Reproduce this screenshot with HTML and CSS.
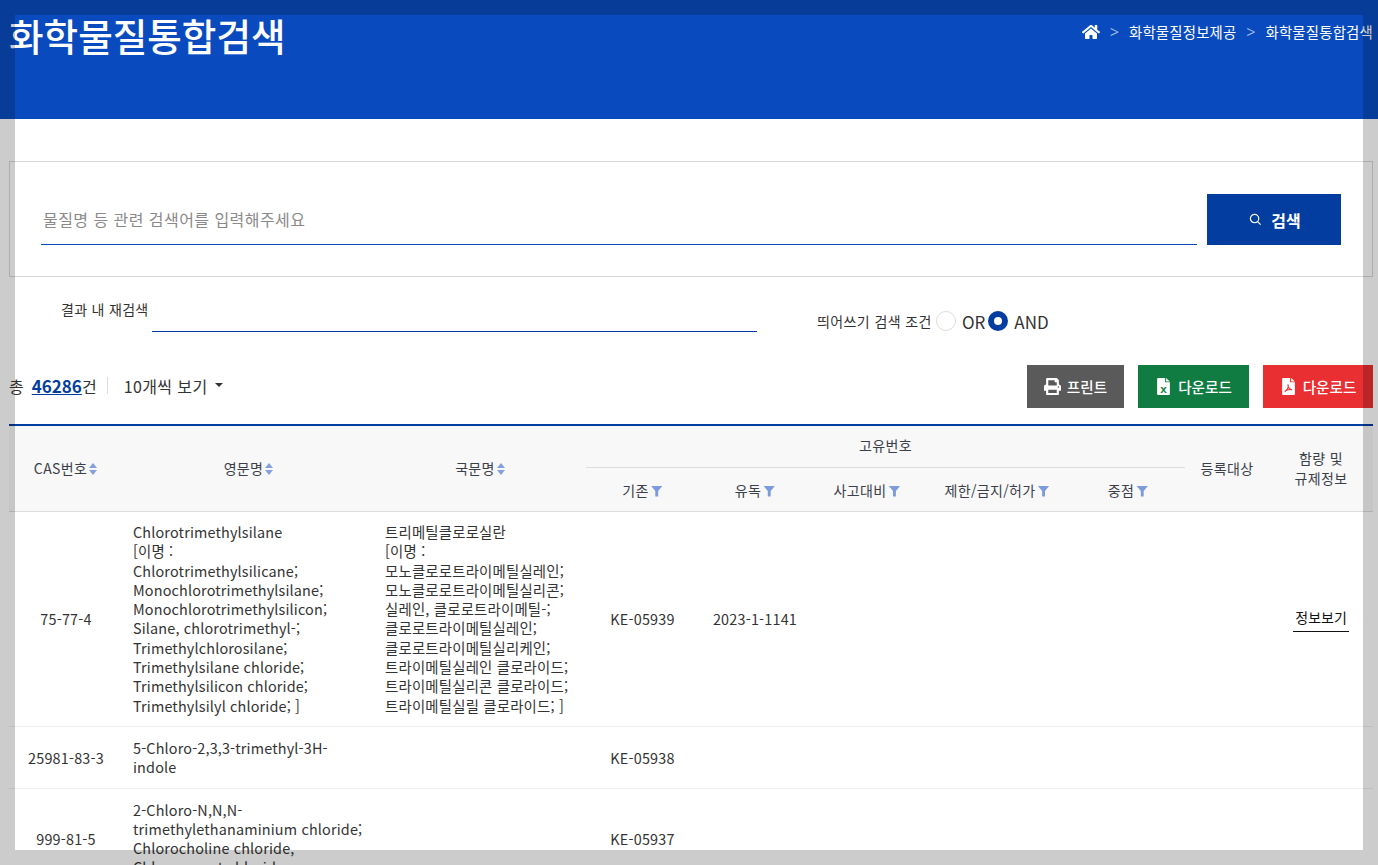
FILE: index.html
```html
<!DOCTYPE html>
<html lang="ko">
<head>
<meta charset="utf-8">
<title>화학물질통합검색</title>
<link rel="stylesheet" href="styles.css">
</head>
<body>
<header class="hero">
  <h1 class="hero-title">화학물질통합검색</h1>
  <nav class="crumbs">
    <svg class="home" viewBox="0 0 576 512"><path d="M280 148 96 300v164c0 9 7 16 16 16l112-.3c9 0 16-7 16-16V368c0-9 7-16 16-16h64c9 0 16 7 16 16v95.700c0 9 7 16 16 16L464 480c9 0 16-7 16-16V300L296 148c-4-3-12-3-16 0zM572 251l-84-69V44c0-7-5-12-12-12h-56c-7 0-12 5-12 12v72l-89-74c-18-14-44-14-61 0L4 251c-5 4-6 12-2 17l26 31c4 5 12 6 17 2L280 107c4-3 12-3 16 0l235 194c5 4 13 3 17-2l26-31c4-5 3-13-2-17z"/></svg>
    <span class="sep">&gt;</span><span>화학물질정보제공</span>
    <span class="sep">&gt;</span><span>화학물질통합검색</span>
  </nav>
</header>

<main class="page">
  <section class="search-box">
    <input class="search-input" type="text" placeholder="물질명 등 관련 검색어를 입력해주세요">
    <button class="search-btn">
      <svg class="glass" viewBox="0 0 14 14"><circle cx="6" cy="6" r="4.500"/><path d="m9.500 9.500 3 3"/></svg>
      검색
    </button>
  </section>

  <section class="refine">
    <label class="refine-label">결과 내 재검색</label>
    <input class="refine-input" type="text">
    <div class="cond">
      <span class="cond-label">띄어쓰기 검색 조건</span>
      <input class="radio" type="radio" name="cond"><span class="cond-opt">OR</span>
      <input class="radio" type="radio" name="cond" checked><span class="cond-opt">AND</span>
    </div>
  </section>

  <section class="toolbar">
    <div class="count">
      <span class="total">총</span><a class="num">46286</a><span>건</span>
      <span class="divider"></span>
      <span class="per">10개씩 보기</span><span class="caret"></span>
    </div>
    <div class="actions">
      <button class="act act-print">
        <svg class="ico-print" viewBox="0 0 512 512"><path d="M448 192V77c0-8-3-17-9-23L393 9c-6-6-14-9-23-9H96C78 0 64 14 64 32v160c-35 0-64 29-64 64v112c0 9 7 16 16 16h48v112c0 9 7 16 16 16h352c9 0 16-7 16-16V384h48c9 0 16-7 16-16V256c0-35-29-64-64-64zm-64 256H128v-96h256v96zm0-224H128V64h192v48c0 9 7 16 16 16h48v96zm48 72c-13 0-24-11-24-24s11-24 24-24 24 11 24 24-11 24-24 24z"/></svg>
        프린트
      </button>
      <button class="act act-xls">
        <svg class="ico-file" viewBox="0 0 12 16"><path class="sheet" d="M0 1q0-1 1-1h6.500v4h4.500v11q0 1-1 1H1q-1 0-1-1zM8.500 0 12 3.200H8.500z"/><text class="x-mark" x="6" y="14">x</text></svg>
        다운로드
      </button>
      <button class="act act-pdf">
        <svg class="ico-file" viewBox="0 0 12 16"><path class="sheet" d="M0 1q0-1 1-1h6.500v4h4.500v11q0 1-1 1H1q-1 0-1-1zM8.500 0 12 3.200H8.500z"/><path class="pdf-mark" d="M5.500 6c.8 2-.5 5-3 7 M5.500 6c-.4 3 2 5 4 5 M2.500 12.500c2-1.500 4-2 7-1.500"/></svg>
        다운로드
      </button>
    </div>
  </section>

  <table class="grid">
    <colgroup>
      <col class="c-cas"><col class="c-en"><col class="c-ko"><col class="c-a"><col class="c-b"><col class="c-c"><col class="c-d"><col class="c-e"><col class="c-f"><col class="c-g">
    </colgroup>
    <thead>
      <tr class="head-1">
        <th rowspan="2">CAS번호<span class="sort"></span></th>
        <th rowspan="2">영문명<span class="sort"></span></th>
        <th rowspan="2">국문명<span class="sort"></span></th>
        <th colspan="5" class="group">고유번호</th>
        <th rowspan="2">등록대상</th>
        <th rowspan="2">함량 및<br>규제정보</th>
      </tr>
      <tr class="head-2">
        <th>기존<span class="funnel"></span></th>
        <th>유독<span class="funnel"></span></th>
        <th>사고대비<span class="funnel"></span></th>
        <th>제한/금지/허가<span class="funnel"></span></th>
        <th>중점<span class="funnel"></span></th>
      </tr>
    </thead>
    <tbody>
      <tr>
        <td class="ctr">75-77-4</td>
        <td class="txt en">Chlorotrimethylsilane<br>[이명 :<br>Chlorotrimethylsilicane;<br>Monochlorotrimethylsilane;<br>Monochlorotrimethylsilicon;<br>Silane, chlorotrimethyl-;<br>Trimethylchlorosilane;<br>Trimethylsilane chloride;<br>Trimethylsilicon chloride;<br>Trimethylsilyl chloride; ]</td>
        <td class="txt">트리메틸클로로실란<br>[이명 :<br>모노클로로트라이메틸실레인;<br>모노클로로트라이메틸실리콘;<br>실레인, 클로로트라이메틸-;<br>클로로트라이메틸실레인;<br>클로로트라이메틸실리케인;<br>트라이메틸실레인 클로라이드;<br>트라이메틸실리콘 클로라이드;<br>트라이메틸실릴 클로라이드; ]</td>
        <td class="ctr">KE-05939</td>
        <td class="ctr">2023-1-1141</td>
        <td></td><td></td><td></td><td></td>
        <td class="ctr"><a class="info">정보보기</a></td>
      </tr>
      <tr>
        <td class="ctr">25981-83-3</td>
        <td class="txt en">5-Chloro-2,3,3-trimethyl-3H-indole</td>
        <td class="txt"></td>
        <td class="ctr">KE-05938</td>
        <td></td><td></td><td></td><td></td><td></td><td></td>
      </tr>
      <tr>
        <td class="ctr">999-81-5</td>
        <td class="txt en">2-Chloro-N,N,N-trimethylethanaminium chloride;<br>Chlorocholine chloride,<br>Chlormequat chloride</td>
        <td class="txt"></td>
        <td class="ctr">KE-05937</td>
        <td></td><td></td><td></td><td></td><td></td><td></td>
      </tr>
    </tbody>
  </table>
</main>

<div class="frame"></div>
</body>
</html>
```

FILE: styles.css
```css
* { box-sizing: border-box; }
html, body { height: 100%; }
body {
  margin: 0;
  height: 865px;
  overflow: hidden;
  background: #fff;
  color: #333;
  font-family: "Noto Sans CJK KR", "Noto Sans", sans-serif;
  font-size: 14.4px;
}
.frame {
  position: fixed;
  inset: 0;
  border: 15px solid rgba(0, 0, 0, .2);
  pointer-events: none;
}
.hero {
  height: 119px;
  background: #094bbf;
  color: #fff;
  display: flex;
  justify-content: space-between;
  align-items: flex-start;
  padding: 0 5px 0 9px;
}
.hero-title {
  margin: 7px 0 0;
  font-size: 37.6px;
  line-height: 56px;
  font-weight: 500;
}
.crumbs {
  display: flex;
  align-items: center;
  margin-top: 21px;
  font-size: 14.4px;
  letter-spacing: .2px;
  line-height: 22px;
}
.home { width: 18px; height: 16px; fill: #fff; }
.sep {
  width: 29px;
  text-align: center;
  opacity: .7;
  font-size: 16px;
  font-family: "Noto Sans", sans-serif;
  font-weight: 300;
}

.page { padding: 0 5px 0 9px; }
.search-box {
  margin-top: 42px;
  height: 116px;
  border: 1px solid #d8d8d8;
  display: flex;
  align-items: flex-start;
  padding: 32px 31px 0 31px;
}
.search-input {
  width: 1156px;
  height: 51px;
  border: 0;
  border-bottom: 1px solid #0a47b8;
  padding: 0 2px;
  outline: 0;
  font: inherit;
  font-size: 16px;
  letter-spacing: .45px;
  color: #333;
}
.search-input::placeholder { color: #8a8a8a; opacity: 1; }
.search-btn {
  margin-left: 10px;
  width: 134px;
  height: 51px;
  border: 0;
  background: #033d9f;
  color: #fff;
  font: inherit;
  font-size: 16px;
  font-weight: 700;
  display: flex;
  align-items: center;
  justify-content: center;
  gap: 9px;
  padding: 0 0 0 2px;
}
.glass { width: 13px; height: 13px; fill: none; stroke: #fff; stroke-width: 1.3; }

.refine {
  display: flex;
  align-items: flex-start;
  height: 88px;
  padding-left: 52px;
}
.refine-label { width: 91px; margin-top: 22px; line-height: 20px; font-size: 14px; letter-spacing: .3px; }
.refine-input {
  width: 605px;
  height: 34px;
  margin-top: 21px;
  border: 0;
  border-bottom: 1px solid #033d9f;
  outline: 0;
  background: transparent;
}
.cond { display: flex; align-items: center; margin: 32px 0 0 60px; height: 24px; }
.cond-label { font-size: 14px; letter-spacing: .4px; margin-right: 4px; }
.cond-opt { font-size: 17px; margin-left: 6px; margin-right: 3px; }
.radio {
  appearance: none;
  width: 20px;
  height: 20px;
  margin: 0;
  border-radius: 50%;
  border: 1px solid #ddd;
  background: #fff;
}
.radio:checked { border: 6px solid #033d9f; }

.toolbar {
  display: flex;
  justify-content: space-between;
  align-items: center;
  height: 43px;
}
.count { display: flex; align-items: center; font-size: 16px; padding-bottom: 2px; }
.total { margin-right: 8px; }
.num { color: #033d9f; font-weight: 700; text-decoration: underline; font-size: 17px; }
.divider { width: 1px; height: 17px; background: #ddd; margin: 0 16px 0 10px; }
.per { color: #333; letter-spacing: .4px; }
.caret {
  margin-left: 7px;
  border-top: 4px solid #333;
  border-left: 4px solid transparent;
  border-right: 4px solid transparent;
  margin-bottom: 2px;
}
.actions { display: flex; gap: 14px; }
.act {
  height: 43px;
  border: 0;
  color: #fff;
  font: inherit;
  font-size: 14.6px;
  font-weight: 500;
  display: flex;
  align-items: center;
  justify-content: center;
  gap: 6px;
  padding: 0;
}
.act-print { width: 97px; background: #5a5a5a; }
.act-xls { width: 111px; background: #107c41; gap: 8px; padding-left: 2px; }
.act-pdf { width: 110px; background: #e92f32; gap: 8px; padding-left: 2px; }
.ico-print { width: 17px; height: 17px; fill: #fff; }
.ico-file { width: 13px; height: 17px; }
.sheet { fill: #fff; }
.x-mark { fill: #107c41; font-family: "Liberation Sans", sans-serif; font-size: 11px; font-weight: 700; text-anchor: middle; }
.pdf-mark { fill: none; stroke: #e92f32; stroke-width: 1; }

.grid {
  width: 1364px;
  margin-top: 16px;
  border-collapse: collapse;
  table-layout: fixed;
  border-top: 2px solid #033d9f;
}
.c-cas { width: 114px; }
.c-en { width: 252px; }
.c-ko { width: 211px; }
.c-a { width: 113px; }
.c-b { width: 112px; }
.c-c { width: 112px; }
.c-d { width: 148px; }
.c-e { width: 114px; }
.c-f { width: 84px; }
.c-g { width: 104px; }
thead th {
  background: #f8f8f8;
  font-weight: 400;
  font-size: 14px;
  letter-spacing: .35px;
  line-height: 20px;
  text-align: center;
  border-bottom: 1px solid #ddd;
  padding: 0;
  color: #3a3f4a;
}
.head-1 { height: 42px; }
.head-2 { height: 44px; }
.group { padding-bottom: 2px; }
.head-2 th { padding-top: 1px; }
.sort { display: inline-block; position: relative; width: 9px; height: 12px; margin-left: 2px; vertical-align: -1px; }
.sort::before, .sort::after {
  content: "";
  position: absolute;
  left: 0;
  border-left: 4.5px solid transparent;
  border-right: 4.5px solid transparent;
}
.sort::before { top: 0; border-bottom: 5px solid #84a0dc; }
.sort::after { bottom: 0; border-top: 5px solid #84a0dc; }
.funnel {
  display: inline-block;
  width: 12px;
  height: 11px;
  margin-left: 2px;
  vertical-align: -1px;
  background: #7d9bdc;
  clip-path: polygon(0 0, 100% 0, 62% 50%, 62% 100%, 38% 100%, 38% 50%);
}
tbody td {
  font-size: 14.4px;
  letter-spacing: .2px;
  line-height: 19.3px;
  padding: 10.5px 10px 11.5px;
  border-bottom: 1px solid #eee;
  color: #333;
}
tbody td.en { letter-spacing: .16px; }
.ctr { text-align: center; white-space: nowrap; }
.info {
  display: inline-block;
  color: #111;
  font-weight: 400;
  font-size: 14px;
  letter-spacing: 0;
  padding: 3px 2px 4px;
  border-bottom: 1px solid #111;
  line-height: 20px;
}
```
